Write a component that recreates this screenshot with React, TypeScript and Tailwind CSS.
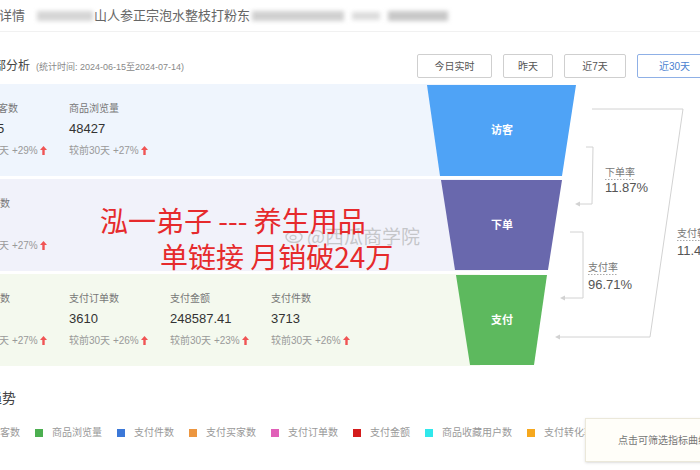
import React from 'react';

type Metric = { label: string; value: string; change: string; shift?: boolean };
type Row = { bg: string; metrics: Metric[] };

const rows: Row[] = [
  {
    bg: 'bg-[#eff5fd]',
    metrics: [
      { label: '商品访客数', value: '30545', change: '+29%' },
      { label: '商品浏览量', value: '48427', change: '+27%' },
    ],
  },
  {
    bg: 'bg-[#f1f2fa]',
    metrics: [{ label: '下单买家数', value: '3626', change: '+27%', shift: true }],
  },
  {
    bg: 'bg-[#f4f9ee]',
    metrics: [
      { label: '支付买家数', value: '3506', change: '+27%', shift: true },
      { label: '支付订单数', value: '3610', change: '+26%' },
      { label: '支付金额', value: '248587.41', change: '+23%' },
      { label: '支付件数', value: '3713', change: '+26%' },
    ],
  },
];

const legend = [
  { name: '访客数', color: 'bg-[#7a8bd6]' },
  { name: '商品浏览量', color: 'bg-[#4caf50]' },
  { name: '支付件数', color: 'bg-[#3b78d8]' },
  { name: '支付买家数', color: 'bg-[#ec9640]' },
  { name: '支付订单数', color: 'bg-[#e060b8]' },
  { name: '支付金额', color: 'bg-[#d41c1c]' },
  { name: '商品收藏用户数', color: 'bg-[#30e8ec]' },
  { name: '支付转化率', color: 'bg-[#f6a81e]' },
];

const UpArrow = () => (
  <svg width="7" height="9" viewBox="0 0 7 9" className="inline-block ml-[2px] -mt-[2px]">
    <path d="M3.5 0 L7 4 H4.7 V9 H2.3 V4 H0 Z" fill="#f05454" />
  </svg>
);

function Funnel() {
  return (
    <svg width="280" height="290" viewBox="0 0 280 290" className="absolute left-[420px] top-[80px]">
      <polygon points="7,5 156,5 142,96 20,96" fill="#4fa3f6" />
      <polygon points="21,100 142,100 128,190 35,190" fill="#6968ad" />
      <polygon points="36,195 127,195 114,285 50,285" fill="#5db95e" />
      <g fill="#fff" fontSize="11" fontWeight="600" textAnchor="middle">
        <text x="82" y="54">访客</text>
        <text x="82" y="149">下单</text>
        <text x="82" y="244">支付</text>
      </g>

      <g stroke="#d2d2d2" strokeWidth="1" fill="none">
        <polyline points="166,67 173,67 172,124 158,124" />
        <polyline points="150,152 163,152 163,218 143,218" />
        <polyline points="172,29 263,29 230,257 138,257" />
      </g>
      <g fill="#d2d2d2">
        <polygon points="155,124 160,121.5 160,126.5" />
        <polygon points="140,218 145,215.5 145,220.5" />
        <polygon points="135,257 140,254.5 140,259.5" />
      </g>

      <g fontSize="10" fill="#777">
        <text x="185" y="96">下单率</text>
        <text x="168" y="191">支付率</text>
        <text x="257" y="157">支付转化率</text>
      </g>
      <g stroke="#aaa" strokeWidth="1" strokeDasharray="1.5 1.5">
        <line x1="185" y1="99.5" x2="215" y2="99.5" />
        <line x1="168" y1="194.5" x2="198" y2="194.5" />
        <line x1="257" y1="160.5" x2="307" y2="160.5" />
      </g>
      <g fontSize="13" fill="#555" fontFamily="Liberation Sans, sans-serif">
        <text x="185" y="112">11.87%</text>
        <text x="168" y="209">96.71%</text>
        <text x="257" y="175">11.48%</text>
      </g>
    </svg>
  );
}

export default function App() {
  return (
    <div className="relative w-[700px] h-[470px] overflow-hidden bg-white font-['Liberation_Sans','Noto_Sans_CJK_SC',sans-serif] text-[#333]">
      {/* title bar */}
      <div className="h-[32px] flex items-center border-b border-[#f1f1f1] text-[13px] text-[#666]">
        <span className="-ml-[1px]">详情</span>
        <span className="ml-[12px] w-[56px] h-[10px] bg-[#d6d6d6] blur-[2px]" />
        <span className="ml-[1px]">山人参正宗泡水整枝打粉东</span>
        <span className="ml-[2px] w-[92px] h-[10px] bg-[#d0d0d0] blur-[2px]" />
        <span className="ml-[8px] w-[28px] h-[8px] bg-[#dcdcdc] blur-[2px]" />
        <span className="ml-[8px] w-[60px] h-[10px] bg-[#c8c8c8] blur-[2px]" />
      </div>

      {/* section header */}
      <div className="mt-[22px] h-[24px] flex items-center justify-between">
        <div className="flex items-baseline -ml-[6px]">
          <span className="text-[12px] text-[#444]">部分析</span>
          <span className="ml-[6px] text-[9px] text-[#888]">(统计时间: 2024-06-15至2024-07-14)</span>
        </div>
        <div className="flex gap-[11px] -mr-[12px] text-[10px] text-[#555]">
          <button className="h-[24px] w-[75px] border border-[#cfcfcf] rounded-[2px] bg-white">今日实时</button>
          <button className="h-[24px] w-[50px] border border-[#cfcfcf] rounded-[2px] bg-white">昨天</button>
          <button className="h-[24px] w-[62px] border border-[#cfcfcf] rounded-[2px] bg-white">近7天</button>
          <button className="h-[24px] w-[75px] border border-[#8fb0e6] rounded-[2px] bg-white text-[#4a7fd0]">近30天</button>
        </div>
      </div>

      {/* metric rows */}
      <div className="mt-[6px] w-[480px] flex flex-col gap-[3px]">
        {rows.map((row, i) => (
          <div key={i} className={`h-[92px] ${row.bg} flex -ml-[32px] pt-[17px]`}>
            {row.metrics.map((m) => (
              <div key={m.label} className="w-[101px] shrink-0">
                <div className={`text-[10px] leading-[16px] text-[#777] ${m.shift ? '-ml-[8px]' : ''}`}>{m.label}</div>
                <div className="mt-[2px] text-[13px] leading-[20px] text-[#333]">{m.value}</div>
                <div className="mt-[5px] text-[10px] leading-[14px] text-[#999] whitespace-nowrap">
                  较前30天 {m.change}
                  <UpArrow />
                </div>
              </div>
            ))}
          </div>
        ))}
      </div>

      {/* trend */}
      <div className="mt-[22px] -ml-[12px] text-[14px] leading-[20px] text-[#444]">趋势</div>
      <div className="mt-[18px] -ml-[27px] flex items-center gap-[15px] text-[10px] leading-[14px] text-[#999] whitespace-nowrap">
        {legend.map((l) => (
          <div key={l.name} className="flex items-center gap-[9px]">
            <span className={`w-[8px] h-[8px] ${l.color}`} />
            <span>{l.name}</span>
          </div>
        ))}
      </div>

      <Funnel />

      {/* tooltip over the legend */}
      <div className="absolute left-[585px] top-[418px] w-[125px] h-[44px] border border-[#ebe8da] bg-[#fffef9] shadow-sm flex items-center pl-[32px] text-[10px] text-[#777] whitespace-nowrap">
        点击可筛选指标曲线
      </div>

      {/* weibo watermark */}
      <div className="absolute left-[285px] top-[224px] flex items-center gap-[4px] text-[19px] leading-[24px] text-[#a8a8a8]/60 font-['Noto_Sans_CJK_SC',sans-serif]">
        <svg width="18" height="14" viewBox="0 0 18 14">
          <ellipse cx="9" cy="8" rx="8" ry="5.5" fill="none" stroke="#b8b8b8" strokeWidth="1.5" opacity="0.7" />
          <ellipse cx="8" cy="8.5" rx="3" ry="2.2" fill="none" stroke="#b8b8b8" strokeWidth="1.2" opacity="0.7" />
        </svg>
        <span>@西瓜商学院</span>
      </div>

      {/* red overlay text */}
      <div className="absolute left-[100px] top-[202px] text-[28px] leading-[36px] text-[#e62a2c] font-['Noto_Sans_CJK_SC',sans-serif] whitespace-nowrap">
        <div>泓一弟子 --- 养生用品</div>
        <div className="ml-[60px]">单链接 月销破24万</div>
      </div>
    </div>
  );
}
